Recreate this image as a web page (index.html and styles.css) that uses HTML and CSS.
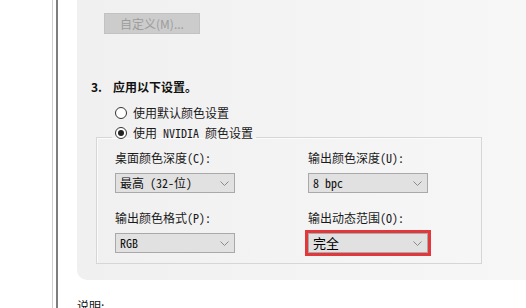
FILE: index.html
```html
<!DOCTYPE html>
<html lang="zh-CN">
<head>
<meta charset="utf-8">
<title>NVIDIA 颜色设置</title>
<link rel="stylesheet" href="styles.css">
</head>
<body>
<div class="page">
  <div class="gutter"></div>
  <div class="rule-light"></div>
  <div class="rule-gap"></div>
  <div class="rule-dark"></div>
  <div class="spacer"></div>
  <div class="main">
    <section class="panel">
      <button class="btn" disabled>自定义(M)...</button>
      <h3 class="heading"><span class="num">3.</span>应用以下设置。</h3>
      <div class="radio-row"><span class="radio"></span><span>使用默认颜色设置</span></div>
      <fieldset class="group">
        <legend class="legend"><span class="legend-row"><span class="radio checked"></span><span>使用 NVIDIA 颜色设置</span></span></legend>
        <div class="grid">
          <div class="field">
            <div class="label">桌面颜色深度(C):</div>
            <div class="select"><span>最高 (32-位)</span><svg class="chev" width="9" height="5" viewBox="0 0 9 5"><polyline points="0.5,0.5 4.5,4.5 8.5,0.5" fill="none" stroke="#8a8a8a" stroke-width="1"/></svg></div>
          </div>
          <div class="field">
            <div class="label">输出颜色深度(U):</div>
            <div class="select"><span>8 bpc</span><svg class="chev" width="9" height="5" viewBox="0 0 9 5"><polyline points="0.5,0.5 4.5,4.5 8.5,0.5" fill="none" stroke="#8a8a8a" stroke-width="1"/></svg></div>
          </div>
          <div class="field">
            <div class="label">输出颜色格式(P):</div>
            <div class="select"><span>RGB</span><svg class="chev" width="9" height="5" viewBox="0 0 9 5"><polyline points="0.5,0.5 4.5,4.5 8.5,0.5" fill="none" stroke="#8a8a8a" stroke-width="1"/></svg></div>
          </div>
          <div class="field">
            <div class="label">输出动态范围(O):</div>
            <div class="select marked"><span class="big">完全</span><svg class="chev" width="9" height="5" viewBox="0 0 9 5"><polyline points="0.5,0.5 4.5,4.5 8.5,0.5" fill="none" stroke="#8a8a8a" stroke-width="1"/></svg></div>
          </div>
        </div>
      </fieldset>
    </section>
    <p class="note">说明:</p>
  </div>
</div>
</body>
</html>
```
FILE: styles.css
```css
* { box-sizing: border-box; }
html, body {
  margin: 0;
  padding: 0;
  background: #ffffff;
}
body {
  width: 526px;
  height: 308px;
  overflow: hidden;
  font-family: "Noto Sans Mono CJK SC", "Noto Sans CJK SC", monospace;
  font-size: 12px;
  color: #1a1a1a;
}
.page {
  display: flex;
  height: 308px;
}
.gutter { width: 52px; flex: none; }
.rule-light { width: 1px; flex: none; background: #cfcfcf; }
.rule-gap { width: 3px; flex: none; }
.rule-dark { width: 2px; flex: none; background: #7e7e7e; }
.spacer { width: 19px; flex: none; }
.main {
  flex: 1;
  display: flex;
  flex-direction: column;
}
.panel {
  display: flex;
  flex-direction: column;
  align-items: flex-start;
  padding: 13px 0 16px 14px;
  background: linear-gradient(to right, #f0f0f0, #f7f7f7);
  border-bottom-left-radius: 10px;
}
.btn {
  margin: 0 0 0 13px;
  width: 96px;
  height: 21px;
  padding: 0;
  background: #cccccc;
  border: 1px solid #c2c2c2;
  font-family: "Noto Sans CJK SC", sans-serif;
  font-size: 12px;
  color: #9d9d9d;
  line-height: 19px;
}
.heading {
  margin: 45px 0 0 0;
  font-family: "Noto Sans CJK SC", sans-serif;
  font-size: 12px;
  font-weight: 700;
  line-height: 16px;
  color: #111;
}
.num { margin-right: 11px; }
.radio-row {
  margin-top: 9px;
  padding-left: 24px;
  height: 18px;
  display: flex;
  align-items: center;
  gap: 6px;
  line-height: 16px;
}
.radio {
  width: 12px;
  height: 12px;
  flex: none;
  border: 1px solid #333;
  border-radius: 50%;
  background: #fff;
  display: flex;
  align-items: center;
  justify-content: center;
}
.radio.checked::after {
  content: "";
  width: 6px;
  height: 6px;
  border-radius: 50%;
  background: #222;
}
.group {
  margin: 3px 0 0 5px;
  width: 386px;
  min-width: 0;
  padding: 1px 0 10px 18px;
  border: 1px solid #d6d6d6;
  box-shadow: inset 1px 1px 0 #fbfbfb;
}
.legend {
  padding: 0 3px 8px;
  margin-left: -3px;
}
.legend-row {
  display: flex;
  align-items: center;
  gap: 6px;
  height: 16px;
  line-height: 16px;
}
.grid {
  display: grid;
  grid-template-columns: 193px 1fr;
  row-gap: 17px;
}
.label {
  line-height: 16px;
  height: 16px;
}
.select {
  margin-top: 7px;
  width: 120px;
  height: 20px;
  display: flex;
  align-items: center;
  justify-content: space-between;
  padding: 0 5px 0 4px;
  background: #e1e1e1;
  border: 1px solid #a9a9a9;
  line-height: 16px;
  color: #111;
}
.select.marked {
  outline: 3px solid #e2383b;
  outline-offset: 0;
}
.big {
  font-family: "Noto Sans CJK SC", sans-serif;
  font-size: 13px;
  color: #000;
}
.chev { flex: none; }
.note {
  margin: 18px 0 0 0;
  font-family: "Noto Sans CJK SC", sans-serif;
  font-size: 12px;
  line-height: 16px;
  color: #111;
}
```
